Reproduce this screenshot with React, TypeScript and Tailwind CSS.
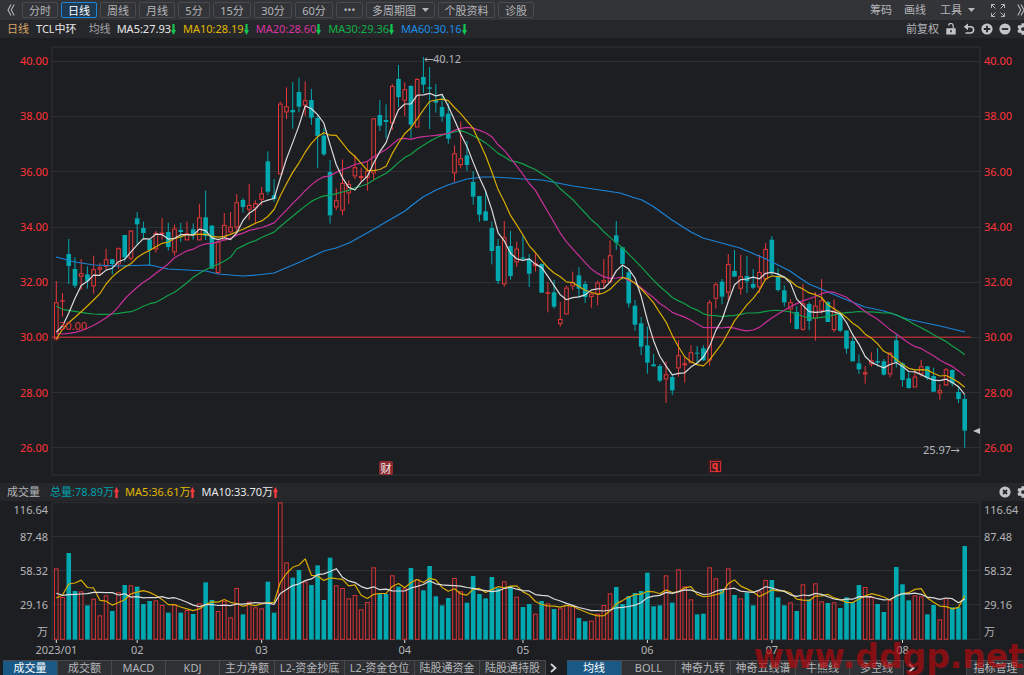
import React from "react";
import { FaCog } from "react-icons/fa";

type Row = [high: number, top: number, bottom: number, low: number, rising: number];
type Candle = { high: number; top: number; bottom: number; low: number; up: boolean; close: number };

// Plot coordinates: the x axis runs 52..980, rows below are stored in thirds of a chart unit.
const X0 = 56.3;
const STEP = 6.222;
const xAt = (i: number) => X0 + STEP * i;
const leftPct = (x: number) => `${((x - 52) / 928) * 100}%`;

const SEGMENTS: { offset: number; rows: Row[] }[] = [
  {
    offset: 510,
    rows: [
      [333, 397, 508, 512, 1], [369, 391, 394, 440, 1], [207, 252, 288, 342, 0], [262, 297, 347, 354, 0],
      [267, 310, 320, 360, 1], [289, 313, 333, 356, 0], [257, 298, 349, 371, 1], [279, 292, 299, 316, 1],
      [236, 268, 290, 298, 1], [267, 268, 282, 313, 0], [232, 235, 283, 297, 1], [195, 195, 262, 275, 0],
      [180, 182, 266, 272, 1], [126, 145, 163, 222, 0], [155, 174, 189, 206, 0], [208, 208, 240, 285, 0],
      [183, 189, 238, 248, 1], [144, 188, 191, 209, 1], [158, 186, 231, 242, 0], [164, 176, 247, 257, 1],
      [158, 180, 186, 216, 0], [155, 190, 211, 211, 1], [160, 178, 193, 209, 0], [102, 142, 211, 211, 1],
      [62, 142, 198, 210, 0], [165, 167, 296, 296, 0], [212, 215, 309, 312, 1], [129, 165, 211, 211, 1],
      [126, 170, 187, 190, 1], [72, 97, 172, 190, 1],
    ],
  },
  {
    offset: 150,
    rows: [
      [444, 450, 471, 488, 0], [402, 465, 479, 510, 1], [451, 460, 475, 523, 1], [411, 430, 449, 466, 1],
      [304, 334, 425, 434, 0], [387, 436, 447, 455, 0], [155, 161, 373, 373, 1], [112, 169, 187, 207, 1],
      [96, 180, 187, 236, 0], [83, 126, 170, 187, 0], [94, 151, 166, 197, 1], [117, 150, 203, 225, 0],
      [197, 204, 258, 355, 0], [233, 257, 313, 318, 0], [330, 366, 496, 521, 0], [416, 451, 472, 480, 1],
      [328, 399, 482, 496, 1], [391, 402, 430, 462, 1], [315, 352, 379, 387, 1], [353, 378, 384, 396, 1],
      [334, 363, 384, 422, 1], [205, 205, 370, 389, 1], [150, 195, 227, 243, 0], [163, 210, 216, 265, 0],
      [102, 108, 220, 240, 1], [45, 87, 141, 171, 0], [97, 118, 152, 198, 1], [105, 108, 224, 265, 0],
      [85, 87, 232, 232, 1], [21, 81, 104, 129, 0], [51, 112, 116, 237, 0], [102, 150, 158, 188, 0],
      [133, 171, 200, 216, 0], [160, 191, 266, 281, 0], [286, 310, 370, 396, 1], [215, 325, 345, 355, 1],
      [273, 316, 345, 363, 0], [364, 396, 440, 464, 0], [438, 438, 494, 515, 0], [424, 484, 512, 512, 0],
      [515, 534, 603, 643, 0], [567, 588, 693, 702, 0], [513, 562, 703, 710, 1], [543, 588, 678, 689, 0],
      [575, 596, 637, 651, 1], [556, 622, 626, 630, 0], [612, 627, 671, 711, 0], [607, 640, 648, 665, 1],
      [640, 642, 728, 728, 0], [695, 727, 731, 787, 1], [690, 727, 770, 776, 0], [756, 807, 822, 830, 1],
      [707, 713, 793, 793, 1], [665, 697, 709, 720, 1], [652, 676, 716, 744, 0], [693, 702, 741, 759, 0],
      [725, 731, 741, 773, 1],
    ],
  },
  {
    offset: 600,
    rows: [
      [242, 248, 283, 316, 1], [177, 241, 248, 265, 1], [121, 166, 247, 250, 1], [63, 106, 128, 150, 0],
      [140, 142, 192, 238, 0], [208, 217, 310, 323, 0], [300, 317, 374, 392, 0], [351, 370, 440, 465, 0],
      [380, 436, 488, 521, 0], [462, 493, 499, 499, 0], [492, 498, 542, 547, 0], [484, 523, 538, 609, 1],
      [525, 531, 571, 585, 0], [421, 466, 505, 530, 1], [473, 490, 496, 548, 1], [436, 457, 489, 489, 1],
      [438, 458, 461, 490, 0], [436, 445, 481, 483, 0], [300, 307, 481, 497, 1], [247, 253, 296, 326, 1],
      [237, 245, 290, 313, 0], [162, 192, 278, 300, 1], [150, 213, 230, 230, 0], [164, 229, 266, 284, 1],
      [168, 228, 244, 279, 0], [207, 252, 263, 267, 0], [164, 216, 262, 279, 1], [129, 147, 238, 242, 1],
      [108, 119, 216, 227, 0], [205, 228, 270, 275, 0], [256, 271, 307, 320, 0],
    ],
  },
  {
    offset: 690,
    rows: [
      [208, 217, 238, 279, 1], [229, 246, 297, 299, 0], [162, 220, 299, 302, 1], [216, 222, 273, 301, 0],
      [186, 227, 265, 332, 1], [147, 211, 243, 250, 1], [213, 216, 276, 276, 0], [208, 242, 300, 306, 1],
      [245, 250, 302, 306, 0], [300, 302, 356, 371, 0], [321, 333, 394, 394, 0], [373, 400, 418, 432, 0],
      [408, 427, 433, 461, 1], [367, 391, 403, 410, 1], [354, 393, 398, 410, 0], [387, 394, 434, 437, 0],
      [366, 368, 433, 442, 1], [314, 331, 396, 413, 0], [397, 400, 450, 470, 0], [427, 445, 474, 476, 0],
      [418, 440, 472, 472, 1], [390, 409, 433, 440, 1], [408, 409, 444, 450, 0], [413, 438, 485, 485, 0],
      [463, 481, 490, 509, 1], [414, 418, 466, 468, 1], [418, 420, 460, 469, 0], [470, 486, 507, 519, 0],
      [494, 507, 602, 653, 0],
    ],
  },
];

const CANDLES: Candle[] = SEGMENTS.flatMap(({ offset, rows }) =>
  rows.map(([h, t, b, l, r]) => {
    const y = (v: number) => (v + offset) / 3;
    return { high: y(h), top: y(t), bottom: y(b), low: y(l), up: r === 1, close: r === 1 ? y(t) : y(b) };
  }),
);

const VOLUME_TOPS = [
  265, 351, 219, 333, 334, 376, 356, 406, 346, 393, 337, 315, 316, 320, 372, 363, 361, 375, 398, 373, 398, 390,
  402, 370, 307, 360, 393, 363, 412, 324, 403, 365, 382, 385, 305, 398, 67, 247, 293, 270, 305, 315, 256, 360,
  233, 316, 324, 355, 345, 388, 366, 262, 342, 342, 286, 320, 325, 264, 297, 331, 258, 349, 376, 354, 294, 334,
  368, 288, 342, 355, 291, 325, 304, 318, 350, 381, 372, 401, 363, 370, 387, 385, 375, 378, 414, 424, 422, 401,
  375, 340, 321, 372, 348, 339, 333, 278, 379, 376, 286, 368, 268, 319, 358, 403, 401, 262, 295, 331, 265, 345,
  355, 338, 376, 334, 300, 300, 352, 376, 367, 393, 313, 358, 310, 364, 369, 367, 384, 352, 367, 315, 321, 351,
  372, 396, 360, 261, 313, 361, 346, 349, 403, 375, 418, 354, 382, 382, 198,
].map((v) => (v + 1440) / 3);

const average = (values: number[], period: number, lead: number[]) =>
  values
    .map((_, i) =>
      i < lead.length
        ? lead[i]
        : values.slice(i - period + 1, i + 1).reduce((sum, v) => sum + v, 0) / period,
    )
    .map((y, i) => `${xAt(i).toFixed(1)},${y.toFixed(1)}`)
    .join(" ");

const shift = (values: number[], offset: number) => values.map((v) => (v + offset) / 3);
const closes = CANDLES.map((c) => c.close);

const MA5 = average(closes, 5, shift([486, 468, 430, 385], 510));
const MA10 = average(closes, 10, shift([507, 478, 458, 442, 425, 408, 390, 371, 342], 510));
const MA20 = average(
  closes,
  20,
  shift([490, 492, 490, 487, 482, 475, 466, 455, 443, 430, 410, 387, 368, 352, 337, 325, 310, 296, 281], 510),
);
const MA30 = average(
  closes,
  30,
  shift(
    [409, 418, 421, 424, 427, 430, 432, 433, 433, 432, 430, 427, 425, 418, 409, 401, 397, 387, 376, 367, 353, 338, 322, 310, 299, 290, 283, 273, 262],
    510,
  ),
);
const MA60 =
  "56,257 75,262 94,265 118,266 150,265 168,269 206,271 218,274 243,276 257,275 274,273 300,262 324,251 336,248 349,243 367,233 386,222 405,211 411,206 423,197 436,190 448,185 467,179 483,177 493,177 510,178 523,179 542,180 573,186 600,190 620,193 632,197 642,200 654,207 672,220 691,232 703,238 740,248 766,259 790,271 797,276 809,284 828,292 847,300 865,307 884,311 907,319 940,326 965,332";
const VOL_MA5 = average(VOLUME_TOPS, 5, shift([354, 345, 312, 309], 1440));
const VOL_MA10 = average(VOLUME_TOPS, 10, shift([340, 346, 344, 343, 342, 341, 337, 337, 338], 1440));

const PRICES = ["40.00", "38.00", "36.00", "34.00", "32.00", "30.00", "28.00", "26.00"];
const MONTHS: [string, number][] = [
  ["2023/01", 0], ["02", 13], ["03", 33], ["04", 56], ["05", 75], ["06", 95], ["07", 115], ["08", 136],
];

function Line({ points, color }: { points: string; color: string }) {
  return <polyline points={points} fill="none" stroke={color} strokeWidth="1.2" strokeLinejoin="round" />;
}

function Trend({ up }: { up?: boolean }) {
  return (
    <svg viewBox="0 0 5 11" className={up ? "h-[11px] w-[5px] text-[#ff3b3b]" : "h-[11px] w-[5px] rotate-180 text-[#12c650]"} aria-hidden="true">
      <path d="M2.500 0 5 5H3.600V11H1.400V5H0z" fill="currentColor" />
    </svg>
  );
}

function Caret() {
  return (
    <svg viewBox="0 0 7 4" className="h-1 w-[7px]" aria-hidden="true">
      <path d="M0 0h7L3.5 4z" fill="currentColor" />
    </svg>
  );
}

function DoubleChevron({ right }: { right?: boolean }) {
  return (
    <svg viewBox="0 0 8 12" className={right ? "h-3 w-2 rotate-180" : "h-3 w-2"} aria-hidden="true">
      <path d="M4 .6 1 6l3 5.4M7.2.6l-3 5.4 3 5.4" fill="none" stroke="currentColor" strokeWidth="1.1" />
    </svg>
  );
}

function RoundIcon({ d }: { d: string }) {
  return (
    <svg viewBox="0 0 12 12" className="size-3" aria-hidden="true">
      <circle cx="6" cy="6" r="5.6" fill="#c3c4c7" />
      <path d={d} stroke="#26272b" strokeWidth="1.8" />
    </svg>
  );
}

function PriceAxis({ side }: { side: "left" | "right" }) {
  return (
    <ul
      className={
        side === "left"
          ? "flex w-[52px] shrink-0 flex-col justify-between pt-[15px] pr-1 pb-[27px] text-right text-[#ff3338]"
          : "flex w-11 shrink-0 flex-col justify-between pt-[15px] pb-[27px] pl-1 text-[#ff3338]"
      }
    >
      {PRICES.map((p) => (
        <li key={p} className="h-4 leading-4">{p}</li>
      ))}
    </ul>
  );
}

function VolumeAxis({ side }: { side: "left" | "right" }) {
  return (
    <ul
      className={
        side === "left"
          ? "w-[52px] shrink-0 pt-px pr-1 text-right leading-4 text-[#b4b5b8]"
          : "w-11 shrink-0 pt-px pl-1 leading-4 text-[#b4b5b8]"
      }
    >
      <li>116.64</li>
      <li className="mt-[11px]">87.48</li>
      <li className="mt-[18px]">58.32</li>
      <li className="mt-[18px]">29.16</li>
      <li className="mt-[11px]">万</li>
    </ul>
  );
}

const PERIODS: [string, string][] = [
  ["分时", "w-9"], ["日线", "w-9"], ["周线", "w-9"], ["月线", "w-9"], ["5分", "w-8"], ["15分", "w-[38px]"],
  ["30分", "w-[38px]"], ["60分", "w-[38px]"], ["•••", "w-[27px]"], ["多周期图", "w-[69px]"], ["个股资料", "w-[57px]"], ["诊股", "w-9"],
];

function Toolbar() {
  return (
    <header className="flex h-5 shrink-0 items-center bg-[#333438] text-[#b4b5b8]">
      <button aria-label="收起" className="flex w-[22px] shrink-0 items-center pl-[7px]">
        <DoubleChevron />
      </button>
      <nav className="flex gap-[3px]">
        {PERIODS.map(([label, width]) => {
          const active = label === "日线";
          return (
            <button
              key={label}
              className={`${width} flex h-4 shrink-0 items-center justify-center gap-[6px] rounded-xs border leading-none ${
                active ? "border-[#1c86d8] bg-[#203a52] text-white" : "border-[#494a4f]"
              } ${label === "•••" ? "text-[10px]" : ""}`}
            >
              {label}
              {label === "多周期图" && <Caret />}
            </button>
          );
        })}
      </nav>
      <div className="-mr-px ml-auto flex shrink-0 items-center">
        <button className="mr-3">筹码</button>
        <button className="mr-[14px]">画线</button>
        <button className="mr-4 flex items-center gap-[6px]">工具<Caret /></button>
        <button aria-label="全屏" className="mr-3">
          <svg viewBox="0 0 14 13" className="h-[13px] w-[14px]" fill="none" stroke="currentColor" aria-hidden="true">
            <path d="M.5 4V.5H4M.5.5l4 4M10 .5h3.500V4M13.500.5l-4 4M.5 9v3.500H4M.5 12.500l4-4M10 12.500h3.500V9M13.500 12.500l-4-4" />
          </svg>
        </button>
        <button aria-label="展开"><DoubleChevron right /></button>
      </div>
    </header>
  );
}

const AVERAGES: [string, string][] = [
  ["MA5:27.93", "text-[#e8e8e8]"], ["MA10:28.19", "text-[#e0b800]"], ["MA20:28.60", "text-[#d634a0]"],
  ["MA30:29.36", "text-[#12b048]"], ["MA60:30.16", "text-[#1c8ee8]"],
];

function InfoBar() {
  return (
    <div className="flex h-[18px] shrink-0 items-center overflow-hidden bg-[#26272b] pl-[7px] whitespace-nowrap">
      <span className="text-[#d9a468]">日线</span>
      <h1 className="ml-[7px] text-[#e8e8e8]">TCL中环</h1>
      <span className="mr-[6px] ml-3 text-[#a4a5a8]">均线</span>
      <div className="flex gap-[7px]">
        {AVERAGES.map(([label, color]) => (
          <span key={label} className={`${color} flex items-center`}>{label}<Trend /></span>
        ))}
      </div>
      <div className="-mr-[5px] ml-auto flex shrink-0 items-center text-[#c3c4c7]">
        <button className="mr-[7px] text-[#b4b5b8]">前复权</button>
        <button aria-label="锁定" className="mr-[7px]">
          <svg viewBox="0 0 10 12" className="h-3 w-[10px]" aria-hidden="true">
            <path d="M2.600 2.600a2.200 2.200 0 0 1 4.600.4v2.500" fill="none" stroke="currentColor" strokeWidth="1.200" />
            <path d="M.3 5.200h9.400v6.300H.3zM4.200 7.200v2h1.600v-2z" fill="currentColor" fillRule="evenodd" />
          </svg>
        </button>
        <button aria-label="撤销" className="mr-[6px]">
          <svg viewBox="0 0 12 12" className="size-3" aria-hidden="true">
            <path d="M2.500 3.800h5a3 3 0 0 1 0 6.200H2.500" fill="none" stroke="currentColor" strokeWidth="1.6" />
            <path d="M.8 3.800 5 .4v6.800z" fill="currentColor" />
          </svg>
        </button>
        <button aria-label="放大" className="mr-[6px]"><RoundIcon d="M6 2.800v6.400M2.800 6h6.400" /></button>
        <button aria-label="缩小" className="mr-[6px]"><RoundIcon d="M2.800 6h6.400" /></button>
        <button aria-label="设置"><FaCog className="size-3" /></button>
      </div>
    </div>
  );
}

function PriceChart() {
  return (
    <section className="flex h-[445px] shrink-0" aria-label="日线">
      <PriceAxis side="left" />
      <div className="relative min-w-0 flex-1">
        <svg viewBox="52 38 928 445" preserveAspectRatio="none" className="block h-full w-full overflow-visible" aria-hidden="true">
          <rect x="52" y="47" width="928" height="428" fill="none" stroke="#2b2c30" strokeWidth="1.5" />
          {PRICES.map((p, i) => (
            <path key={p} d={`M52 ${Math.round(61 + i * 55.2) + 0.5}H980`} stroke="#2f3034" />
          ))}
          <path d="M52 337.300H971" stroke="#a32e31" strokeWidth="1.5" />
          {CANDLES.map((c, i) => {
            const x = xAt(i);
            const color = c.up ? "#e6383a" : "#00a8b0";
            return (
              <g key={i} stroke={color}>
                {c.up ? (
                  <>
                    <path d={`M${x} ${c.high}V${c.top}M${x} ${c.bottom}V${c.low}`} />
                    <rect x={x - 1.8} y={c.top + 0.4} width="3.6" height={Math.max(0.4, c.bottom - c.top - 0.8)} fill="none" />
                  </>
                ) : (
                  <>
                    <path d={`M${x} ${c.high}V${c.low}`} />
                    <rect x={x - 2.3} y={c.top} width="4.6" height={Math.max(1, c.bottom - c.top)} fill={color} stroke="none" />
                  </>
                )}
              </g>
            );
          })}
          <Line points={MA60} color="#1c84d8" />
          <Line points={MA30} color="#12a048" />
          <Line points={MA20} color="#c8309a" />
          <Line points={MA10} color="#d8ac00" />
          <Line points={MA5} color="#dcdcdc" />
          <path d="M980 428v6l-7-3z" fill="#c3c4c7" />
        </svg>
        <span className="absolute top-[281px] left-[7px] leading-[14px] text-[#e0383c]">30.00</span>
        <span className="absolute top-[14px] flex items-center leading-[14px] text-[#b4b5b8]" style={{ left: leftPct(424) }}>
          <svg viewBox="0 0 9 5" className="h-[5px] w-[9px]" fill="none" stroke="currentColor" aria-hidden="true"><path d="M9 2.500H1M3 .5l-2 2 2 2" /></svg>
          40.12
        </span>
        <span className="absolute top-[405px] flex items-center leading-[14px] text-[#b4b5b8]" style={{ left: leftPct(923) }}>
          25.97
          <svg viewBox="0 0 9 5" className="h-[5px] w-[9px]" fill="none" stroke="currentColor" aria-hidden="true"><path d="M0 2.500h8M6 .5l2 2-2 2" /></svg>
        </span>
        <span className="absolute top-[423px] flex h-[14px] w-[14px] items-center justify-center rounded-xs bg-[#8c2a2d] leading-none text-[#eeeeee]" style={{ left: leftPct(379) }}>
          财
        </span>
        <span className="absolute top-[421px] flex h-[14px] w-[14px] items-center justify-center bg-[#3a1d20]" style={{ left: leftPct(708) }}>
          <span className="flex h-[11px] w-[11px] items-center justify-center border border-[#d22c30] pb-[2px] text-[10px] leading-none font-bold text-[#ff3a3a]">q</span>
        </span>
      </div>
      <PriceAxis side="right" />
    </section>
  );
}

function VolumeHeader() {
  return (
    <div className="flex h-[18px] shrink-0 items-center overflow-hidden bg-[#26272b] pl-[7px] whitespace-nowrap">
      <h2 className="mr-[10px] text-[#b4b5b8]">成交量</h2>
      <div className="flex gap-[6px]">
        <span className="flex items-center text-[#00a0aa]">总量:78.89万<Trend up /></span>
        <span className="flex items-center text-[#e0b800]">MA5:36.61万<Trend up /></span>
        <span className="flex items-center text-[#e8e8e8]">MA10:33.70万<Trend up /></span>
      </div>
      <div className="-mr-[5px] ml-auto flex shrink-0 items-center gap-[6px] text-[#c3c4c7]">
        <button aria-label="关闭"><RoundIcon d="M4 4l4 4M8 4l-4 4" /></button>
        <button aria-label="设置"><FaCog className="size-3" /></button>
      </div>
    </div>
  );
}

function VolumeChart() {
  return (
    <section className="flex h-[159px] shrink-0" aria-label="成交量">
      <VolumeAxis side="left" />
      <div className="relative min-w-0 flex-1">
        <svg viewBox="52 501 928 143" preserveAspectRatio="none" className="block h-[143px] w-full overflow-visible" aria-hidden="true">
          <rect x="52" y="502.500" width="928" height="137" fill="none" stroke="#2b2c30" strokeWidth="1.5" />
          <path d="M52 536.500H980M52 570.500H980M52 604.500H980" stroke="#2f3034" />
          {VOLUME_TOPS.map((top, i) => {
            const x = xAt(i);
            return CANDLES[i].up ? (
              <rect key={i} x={x - 1.8} y={top + 0.5} width="3.6" height={638.8 - top} fill="none" stroke="#d83437" />
            ) : (
              <rect key={i} x={x - 2.3} y={top} width="4.6" height={639.6 - top} fill="#00a8b0" />
            );
          })}
          <Line points={VOL_MA5} color="#d8ac00" />
          <Line points={VOL_MA10} color="#dcdcdc" />
          {MONTHS.map(([label, i]) => (
            <path key={label} d={`M${xAt(i)} 640v3`} stroke="#dcdcdc" />
          ))}
        </svg>
        {MONTHS.map(([label, i]) => (
          <span key={label} className="absolute top-[141px] -translate-x-1/2 leading-4 text-[#b4b5b8]" style={{ left: leftPct(xAt(i)) }}>
            {label}
          </span>
        ))}
      </div>
      <VolumeAxis side="right" />
    </section>
  );
}

const INDICATORS: [string, string][] = [
  ["成交量", "w-[55px]"], ["成交额", "w-[54px]"], ["MACD", "w-[54px]"], ["KDJ", "w-[54px]"], ["主力净额", "w-[55px]"],
  ["L2-资金抄底", "w-[70px]"], ["L2-资金仓位", "w-[70px]"], ["陆股通资金", "w-[65px]"], ["陆股通持股", "w-[66px]"],
];
const OVERLAYS: [string, string][] = [
  ["均线", "w-[55px]"], ["BOLL", "w-[54px]"], ["神奇九转", "w-[55px]"], ["神奇五线谱", "w-[65px]"], ["牛熊线", "w-[54px]"], ["多空线", "w-[54px]"],
];

function Tabs({ items }: { items: [string, string][] }) {
  return (
    <div className="flex">
      {items.map(([label, width], i) => (
        <button
          key={label}
          className={`${width} h-[15px] shrink-0 border-t border-r border-[#48494d] leading-[14px] whitespace-nowrap ${
            i === 0 ? "bg-[#1a5886] text-white" : "bg-[#2f3034] text-[#b4b5b8]"
          }`}
        >
          {label}
        </button>
      ))}
    </div>
  );
}

function More() {
  return (
    <button aria-label="更多" className="flex h-[15px] w-[21px] shrink-0 items-center pl-1 text-[#d4d5d8]">
      <svg viewBox="0 0 7 10" className="h-[10px] w-[7px]" fill="none" stroke="currentColor" strokeWidth="1.8" aria-hidden="true">
        <path d="m1 1 4.500 4L1 9" />
      </svg>
    </button>
  );
}

export default function App() {
  return (
    <main className="relative flex min-h-screen min-w-0 flex-col overflow-hidden bg-[#1d1e22] font-['Noto_Sans','Noto_Sans_CJK_SC',sans-serif] text-[11px] leading-4">
      <Toolbar />
      <InfoBar />
      <PriceChart />
      <VolumeHeader />
      <VolumeChart />
      <footer className="flex h-[15px] shrink-0 items-center pl-[3px]">
        <Tabs items={INDICATORS} />
        <More />
        <Tabs items={OVERLAYS} />
        <More />
        <button className="ml-auto h-[15px] w-[58px] shrink-0 border-t border-l border-[#48494d] bg-[#2f3034] leading-[14px] text-[#b4b5b8]">指标管理</button>
      </footer>
      <span className="pointer-events-none absolute right-0 bottom-0 font-['DejaVu_Sans'] text-[33px] leading-9 font-bold whitespace-nowrap text-[#b40a0e]/70">
        www.ddgp.net
      </span>
    </main>
  );
}
